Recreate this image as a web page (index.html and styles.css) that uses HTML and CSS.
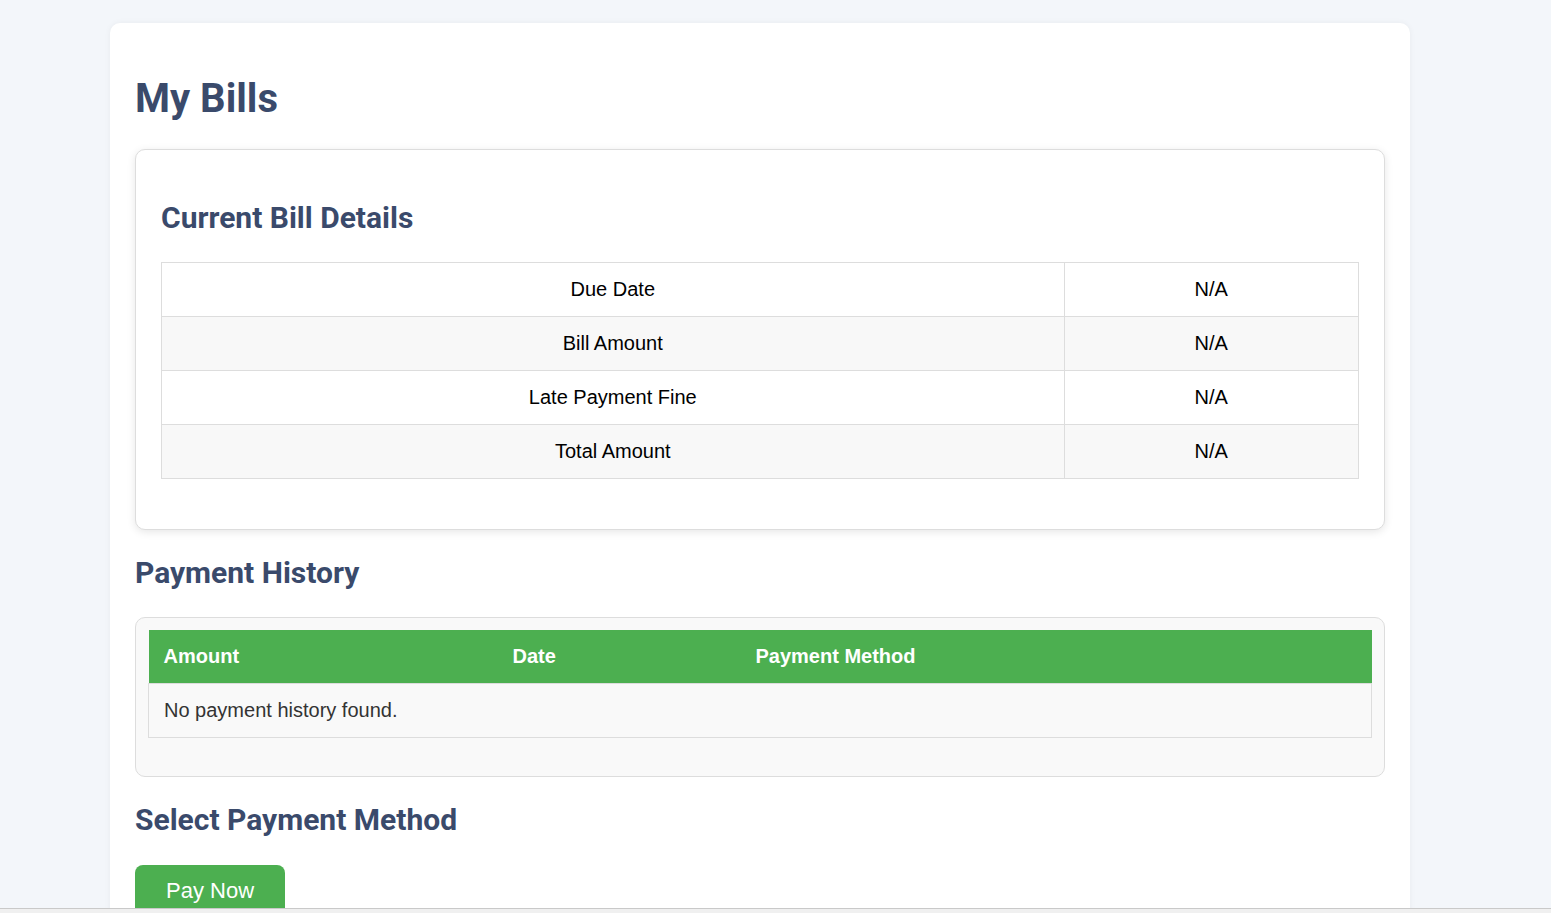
FILE: index.html
```html
<!DOCTYPE html>
<html lang="en">
<head>
<meta charset="utf-8">
<title>My Bills</title>
<link rel="stylesheet" href="styles.css">
</head>
<body>
<div class="container">
  <h1 class="page-title">My Bills</h1>

  <section class="bill-card">
    <h2 class="section-title">Current Bill Details</h2>
    <table class="bill-table">
      <tbody>
        <tr><td class="label">Due Date</td><td>N/A</td></tr>
        <tr><td class="label">Bill Amount</td><td>N/A</td></tr>
        <tr><td class="label">Late Payment Fine</td><td>N/A</td></tr>
        <tr><td class="label">Total Amount</td><td>N/A</td></tr>
      </tbody>
    </table>
  </section>

  <h2 class="section-title">Payment History</h2>
  <section class="history-card">
    <table class="history-table">
      <thead>
        <tr>
          <th class="col-amount">Amount</th>
          <th class="col-date">Date</th>
          <th>Payment Method</th>
        </tr>
      </thead>
      <tbody>
        <tr><td colspan="3">No payment history found.</td></tr>
      </tbody>
    </table>
  </section>

  <h2 class="section-title">Select Payment Method</h2>
  <div class="pay-row">
    <button class="pay-btn" type="button">Pay Now</button>
  </div>
</div>
<div class="scroll-edge"></div>
</body>
</html>
```

FILE: styles.css
```css
html, body {
  margin: 0;
  padding: 0;
}

body {
  background: #f3f6fa;
  font-family: "Liberation Sans", Arial, sans-serif;
  color: #333;
}

.container {
  width: 1300px;
  box-sizing: border-box;
  margin: 23px 0 0 110px;
  padding: 25px 25px 40px;
  background: #ffffff;
  border-radius: 10px;
  box-shadow: 0 0 6px rgba(0, 0, 0, 0.05);
}

.page-title {
  font-family: Roboto, "Liberation Sans", sans-serif;
  font-weight: 700;
  font-size: 40px;
  color: #3a4a6b;
  margin: 27px 0 27px;
}

.section-title {
  font-family: Roboto, "Liberation Sans", sans-serif;
  font-weight: 700;
  font-size: 30px;
  color: #3a4a6b;
  margin: 25px 0;
}

.bill-card {
  border: 1px solid #ddd;
  border-radius: 10px;
  padding: 25px;
  background: #fff;
  box-shadow: 0 2px 8px rgba(0, 0, 0, 0.1);
}

.bill-table {
  width: 100%;
  border-collapse: collapse;
  margin: 27px 0 25px;
  font-size: 20px;
  color: #000;
}

.bill-table td {
  border: 1px solid #ddd;
  padding: 15px;
  text-align: center;
}

.bill-table td.label {
  width: 75.4%;
}

.bill-table tr:nth-child(even) td {
  background: #f8f8f8;
}

.history-card {
  margin-top: 27px;
  border: 1px solid #ddd;
  border-radius: 10px;
  padding: 12px 12px 38px;
  background: #f9f9f9;
}

.history-table {
  width: 100%;
  border-collapse: collapse;
  font-size: 20px;
}

.history-table th {
  background: #4caf50;
  color: #fff;
  font-weight: 700;
  text-align: left;
  padding: 15px;
  border: none;
}

.history-table th.col-amount {
  width: 319px;
}

.history-table th.col-date {
  width: 213px;
}

.history-table td {
  border: 1px solid #ddd;
  padding: 15px;
  background: #f9f9f9;
  color: #333;
}

.pay-row {
  margin-top: 28px;
}

.pay-btn {
  display: inline-block;
  font-family: "Liberation Sans", Arial, sans-serif;
  font-size: 22px;
  color: #fff;
  background: #4caf50;
  border: none;
  border-radius: 8px;
  padding: 13px 31px;
  cursor: pointer;
}

.scroll-edge {
  position: fixed;
  left: 0;
  right: 0;
  bottom: 0;
  height: 4px;
  background: #f0f0f0;
  border-top: 1px solid #c9c9c9;
}
```
